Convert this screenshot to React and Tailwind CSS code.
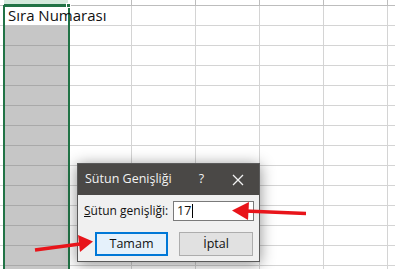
import React from "react";

const font = { fontFamily: '"Open Sans", "Noto Sans", sans-serif' };

const COLS = 6;
const ROWS = 14;

function HeaderRow() {
  return (
    <div className="flex h-[6px]">
      <div className="w-[4px] shrink-0 border-b border-[#bdbdbd] bg-white" />
      <div className="w-[64px] shrink-0 border-b-2 border-[#217346] bg-[#d3e9dc]" />
      {Array.from({ length: COLS - 1 }).map((_, i) => (
        <div key={i} className="w-[64px] shrink-0 border-b border-r border-[#bdbdbd] bg-white" />
      ))}
      <div className="flex-1 border-b border-[#bdbdbd] bg-white" />
    </div>
  );
}

function Row({ index }) {
  const first = index === 0;
  return (
    <div className="flex h-[20px]">
      <div className="w-[4px] shrink-0 border-b border-[#d4d4d4] bg-white" />
      <div
        className={
          first
            ? "w-[64px] shrink-0 border-b border-[#c8c8c8] bg-white relative"
            : "w-[64px] shrink-0 border-b border-[#a9a9a9] bg-[#c6c6c6]"
        }
      >
        {first && (
          <span
            className="absolute left-[4px] top-[0px] whitespace-nowrap text-[15px] leading-[19px] text-[#111] z-10"
            style={font}
          >
            Sıra Numarası
          </span>
        )}
      </div>
      {Array.from({ length: COLS - 1 }).map((_, i) => (
        <div key={i} className="w-[64px] shrink-0 border-b border-r border-[#d4d4d4] bg-white" />
      ))}
      <div className="flex-1 border-b border-[#d4d4d4] bg-white" />
    </div>
  );
}

function Dialog() {
  return (
    <div
      className="absolute left-[77px] top-[163px] w-[183px] h-[99px] bg-[#f0f0f0] border border-[#5a5a5a] shadow-[0_2px_14px_rgba(0,0,0,0.45)] flex flex-col"
      style={font}
    >
      <div className="h-[31px] bg-[#4a4846] flex items-center text-[#f2f2f2] text-[12.5px]">
        <span className="pl-[7px]">Sütun Genişliği</span>
        <span className="ml-[27px]">?</span>
        <span className="ml-auto mr-[15px]">
          <svg width="12" height="12" viewBox="0 0 12 12">
            <path d="M1 1L11 11M11 1L1 11" stroke="#f2f2f2" strokeWidth="1.3" />
          </svg>
        </span>
      </div>
      <div className="flex items-center pl-[6px] mt-[6px] text-[12px] text-[#111]">
        <span className="w-[89px]">
          <span className="underline">S</span>ütun genişliği:
        </span>
        <div className="w-[81px] h-[20px] bg-white border border-[#7a7a7a] flex items-center pl-[3px] text-[12.5px]">
          17<span className="inline-block w-px h-[14px] bg-black ml-px" />
        </div>
      </div>
      <div className="flex mt-[11px] pl-[17px] gap-[11px] text-[12.5px] text-[#111]">
        <button className="w-[73px] h-[24px] bg-[#e5f1fb] border-2 border-[#0078d7] flex items-center justify-center">
          Tamam
        </button>
        <button className="w-[74px] h-[24px] bg-[#e1e1e1] border border-[#adadad] flex items-center justify-center">
          İptal
        </button>
      </div>
    </div>
  );
}

function Arrows() {
  return (
    <svg className="absolute left-0 top-0 pointer-events-none" width="395" height="269" viewBox="0 0 395 269">
      <line x1="306" y1="213.5" x2="245" y2="211" stroke="#e8141a" strokeWidth="3.5" />
      <polygon points="232,210.5 249,202 248,220" fill="#e8141a" />
      <line x1="35" y1="250" x2="80" y2="244" stroke="#e8141a" strokeWidth="3.5" />
      <polygon points="93,241.5 78,235 80,252" fill="#e8141a" />
    </svg>
  );
}

export default function App() {
  return (
    <div className="relative w-[395px] h-[269px] overflow-hidden bg-white">
      <HeaderRow />
      {Array.from({ length: ROWS }).map((_, i) => (
        <Row key={i} index={i} />
      ))}

      {/* selection border */}
      <div className="absolute left-[3px] top-[5px] w-[67px] h-[280px] border-2 border-[#217346] pointer-events-none" />
      <div className="absolute left-[66px] top-[3px] w-[5px] h-[5px] bg-[#217346] border border-white" />

      <Dialog />
      <Arrows />
    </div>
  );
}
